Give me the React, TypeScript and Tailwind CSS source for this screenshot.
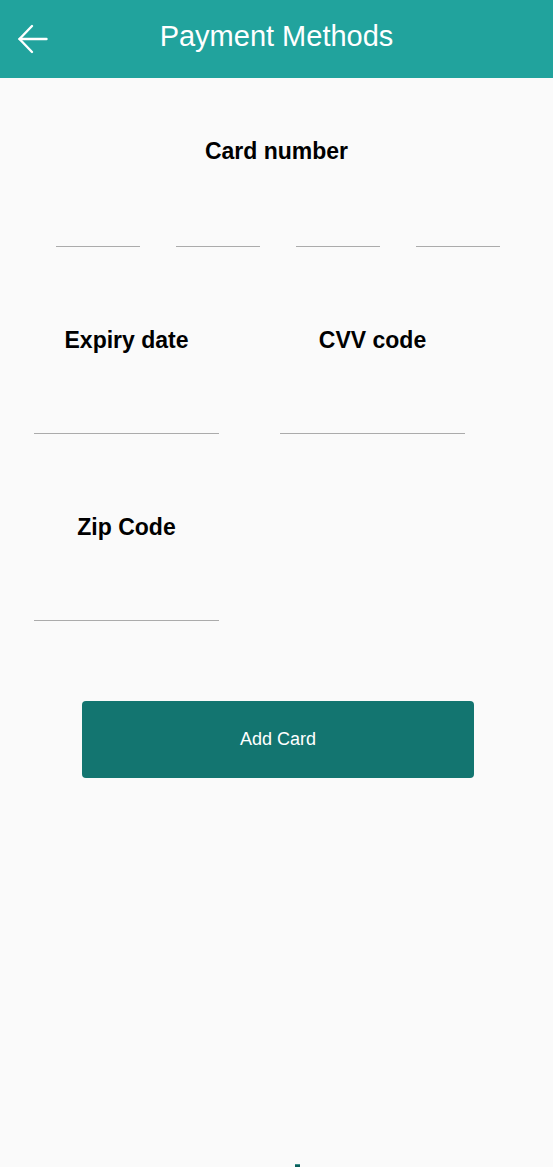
import React from "react";

function Field({ label, width }: { label: string; width: string }) {
  return (
    <div className={`flex flex-col items-center ${width}`}>
      <div className="text-[23px] leading-[28px] font-bold text-black">{label}</div>
      <div className="mt-[40px] h-[40px] w-full border-b-[1.5px] border-[#ababab]" />
    </div>
  );
}

export default function App() {
  return (
    <div
      className="min-h-screen h-[1167px] overflow-hidden bg-[#fafafa] flex flex-col"
      style={{ fontFamily: '"Liberation Sans", Arial, sans-serif' }}
    >
      <header className="h-[78px] bg-[#21a39d] flex items-center pb-[7px] shrink-0">
        <div className="w-[66px] flex items-center pl-[17px]">
          <svg width="32" height="30" viewBox="0 0 32 30" fill="none" stroke="white" strokeWidth="2.4" strokeLinecap="round" strokeLinejoin="round" className="mt-[6px]">
            <path d="M29.5 15 H2.5" />
            <path d="M15 2 L2.5 15 L15 28" />
          </svg>
        </div>
        <div className="flex-1 text-center text-white text-[29px] leading-[34px]">Payment Methods</div>
        <div className="w-[66px]" />
      </header>

      <div className="mt-[59px] flex flex-col items-center">
        <div className="text-[23px] leading-[28px] font-bold text-black">Card number</div>
      </div>
      <div className="mt-[40px] flex pl-[56px] gap-[36px]">
        <div className="w-[84px] h-[42px] border-b-[1.5px] border-[#ababab]" />
        <div className="w-[84px] h-[42px] border-b-[1.5px] border-[#ababab]" />
        <div className="w-[84px] h-[42px] border-b-[1.5px] border-[#ababab]" />
        <div className="w-[84px] h-[42px] border-b-[1.5px] border-[#ababab]" />
      </div>

      <div className="mt-[79px] flex pl-[34px] gap-[61px]">
        <Field label="Expiry date" width="w-[185px]" />
        <Field label="CVV code" width="w-[185px]" />
      </div>

      <div className="mt-[79px] flex pl-[34px]">
        <Field label="Zip Code" width="w-[185px]" />
      </div>

      <div className="mt-[80px] flex pl-[82px]">
        <button className="w-[392px] h-[77px] rounded-[4px] bg-[#137570] text-white text-[18px] flex items-center justify-center">
          Add Card
        </button>
      </div>

      <div className="mt-[386px] flex pl-[295px]">
        <div className="w-[5px] h-[4px] bg-[#0b5f5b] border-t border-[#3a8f8a]" />
      </div>
    </div>
  );
}
